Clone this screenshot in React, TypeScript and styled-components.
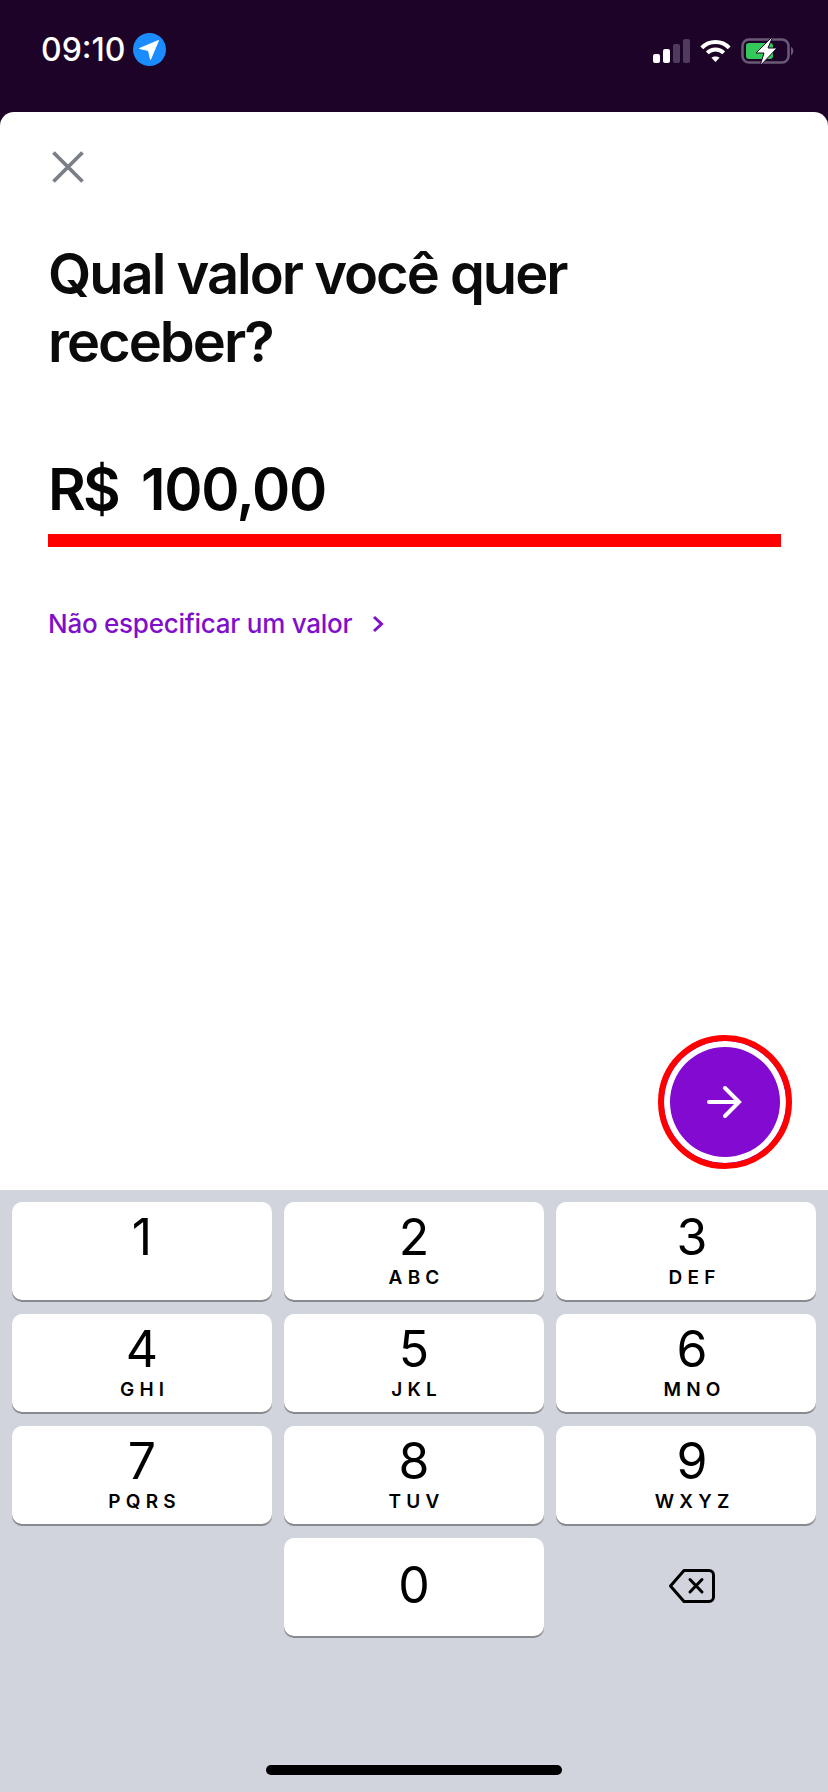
import React from "react";
import styled, { createGlobalStyle } from "styled-components";

const Global = createGlobalStyle`
  html, body { margin: 0; padding: 0; background: #1e0328; }
  * { box-sizing: border-box; }
`;

const Phone = styled.div`
  width: 828px;
  height: 1792px;
  display: flex;
  flex-direction: column;
  overflow: hidden;
  background: #1e0328;
  font-family: Inter, "Liberation Sans", sans-serif;
`;

const StatusBar = styled.div`
  height: 112px;
  flex: none;
  display: flex;
  justify-content: space-between;
  align-items: flex-start;
  padding: 30px 34px 0 41px;
`;

const TimeGroup = styled.div`
  display: flex;
  align-items: center;
  gap: 8px;
  margin-top: 3px;
`;

const Time = styled.span`
  color: #fff;
  font-size: 32px;
  line-height: 33px;
  font-weight: 500;
`;

const StatusIcons = styled.div`
  display: flex;
  align-items: center;
  gap: 10px;
  padding-top: 6px;
`;

const Sheet = styled.main`
  flex: 1;
  background: #fff;
  border-radius: 14px 14px 0 0;
  display: flex;
  flex-direction: column;
  padding: 0 36px 21px 48px;
`;

const CloseButton = styled.button`
  align-self: flex-start;
  border: 0;
  padding: 0;
  background: none;
  width: 40px;
  height: 40px;
  margin: 35px 0 0 0;
  display: flex;
`;

const Title = styled.h1`
  margin: 53px 0 0;
  width: 600px;
  font-size: 56px;
  line-height: 68px;
  font-weight: 570;
  letter-spacing: -2px;
  color: #0b0b0b;
`;

const AmountField = styled.div`
  margin: 75px 11px 0 0;
  height: 96px;
  border-bottom: 13px solid #ff0000;
  display: flex;
  gap: 23px;
  font-size: 58px;
  line-height: 76px;
  font-weight: 570;
  color: #050505;
`;

const Currency = styled.span`
  letter-spacing: -2.8px;
`;

const AmountValue = styled.span`
  letter-spacing: -1.3px;
`;

const LinkRow = styled.a`
  margin-top: 60px;
  display: flex;
  align-items: center;
  gap: 20px;
  color: #7f0fcb;
  font-size: 26px;
  line-height: 34px;
  font-weight: 500;
  letter-spacing: -0.25px;
`;

const Fab = styled.button`
  margin-top: auto;
  align-self: flex-end;
  width: 134px;
  height: 134px;
  border-radius: 50%;
  border: 6px solid #ff0000;
  background: #820ad1;
  box-shadow: inset 0 0 0 6px #fff;
  padding: 0;
  display: flex;
  align-items: center;
  justify-content: center;
`;

const Keyboard = styled.section`
  height: 602px;
  flex: none;
  position: relative;
  background: #d1d4dc;
  padding: 12px 12px 0;
  display: grid;
  grid-template-columns: repeat(3, 260px);
  grid-auto-rows: 98px;
  column-gap: 12px;
  row-gap: 14px;
`;

const Key = styled.div<{ $right?: boolean }>`
  background: #fff;
  border-radius: 10px;
  box-shadow: 0 2px 0 #898a8d;
  display: flex;
  flex-direction: column;
  align-items: center;
  color: #000;
  padding-left: ${(p) => (p.$right ? "12px" : "0")};
`;

const Digit = styled.span<{ $alone?: boolean }>`
  font-size: 50px;
  line-height: 52px;
  font-weight: 400;
  margin-top: ${(p) => (p.$alone ? "21px" : "9px")};
`;

const Letters = styled.span`
  font-size: 19px;
  line-height: 22px;
  font-weight: 600;
  letter-spacing: 5.2px;
  margin: 4px -5.2px 0 0;
`;

const EmptyKey = styled.div``;

const BackspaceKey = styled.div`
  display: flex;
  align-items: center;
  justify-content: center;
  padding: 0 0 2px 11px;
`;

const HomeBar = styled.div`
  position: absolute;
  left: 266px;
  bottom: 17px;
  width: 296px;
  height: 10px;
  border-radius: 5px;
  background: #000;
`;

const keys: [string, string][] = [
  ["1", ""],
  ["2", "ABC"],
  ["3", "DEF"],
  ["4", "GHI"],
  ["5", "JKL"],
  ["6", "MNO"],
  ["7", "PQRS"],
  ["8", "TUV"],
  ["9", "WXYZ"],
];

export default function App() {
  return (
    <Phone>
      <Global />
      <StatusBar>
        <TimeGroup>
          <Time>09:10</Time>
          <svg width="33" height="33" viewBox="0 0 33 33">
            <circle cx="16.5" cy="16.5" r="16.5" fill="#1a8cff" />
            <path d="M6.5 15.5 L25.5 7.5 L17.5 26.5 L15.5 17.5 Z" fill="#fff" stroke="#fff" strokeLinejoin="round" />
          </svg>
        </TimeGroup>
        <StatusIcons>
          <svg width="37" height="24" viewBox="0 0 37 24">
            <rect x="0" y="15" width="7" height="9" rx="2" fill="#fff" />
            <rect x="10" y="10" width="7" height="14" rx="2" fill="#fff" />
            <rect x="20" y="5" width="7" height="19" rx="2" fill="#4f3b5c" />
            <rect x="30" y="0" width="7" height="24" rx="2" fill="#4f3b5c" />
          </svg>
          <svg width="31" height="24" viewBox="0 0 34 26" fill="none" stroke="#fff" strokeWidth="4.4">
            <path d="M2 9.5 C10 1 24 1 32 9.5" />
            <path d="M8 15 C13 10 21 10 26 15" />
            <path d="M17 25 L12.5 20.5 C15 18.5 19 18.5 21.5 20.5 Z" fill="#fff" stroke="none" />
          </svg>
          <svg width="53" height="30" viewBox="0 0 53 30">
            <rect x="1.5" y="3.5" width="46" height="23" rx="6.5" fill="none" stroke="#6b5a76" strokeWidth="2.5" />
            <rect x="5" y="7" width="27" height="16" rx="3" fill="#34c759" />
            <path d="M50 11 C53 12 53 18 50 19 Z" fill="#6b5a76" />
            <path d="M32 0 L15 17 H23 L19 30 L36 12 H27 Z" fill="#fff" stroke="#1e0328" strokeWidth="1" />
          </svg>
        </StatusIcons>
      </StatusBar>
      <Sheet>
        <CloseButton aria-label="Fechar">
          <svg width="40" height="40" viewBox="0 0 40 40" stroke="#7a7f87" strokeWidth="3.8">
            <path d="M5.5 5.5 L34.5 34.5 M34.5 5.5 L5.5 34.5" />
          </svg>
        </CloseButton>
        <Title>Qual valor você quer receber?</Title>
        <AmountField>
          <Currency>R$</Currency>
          <AmountValue>100,00</AmountValue>
        </AmountField>
        <LinkRow>
          Não especificar um valor
          <svg width="12" height="18" viewBox="0 0 12 18" fill="none" stroke="#7f0fcb" strokeWidth="3">
            <path d="M2 2 L9.5 9 L2 16" />
          </svg>
        </LinkRow>
        <Fab aria-label="Continuar">
          <svg width="36" height="34" viewBox="0 0 36 34" fill="none" stroke="#fff" strokeWidth="4" strokeLinecap="round">
            <path d="M2 17 H32 M18 3 L32 17 L18 31" />
          </svg>
        </Fab>
      </Sheet>
      <Keyboard>
        {keys.map(([d, l], i) => (
          <Key key={d} $right={i % 3 === 2}>
            <Digit>{d}</Digit>
            {l && <Letters>{l}</Letters>}
          </Key>
        ))}
        <EmptyKey />
        <Key>
          <Digit $alone>0</Digit>
        </Key>
        <BackspaceKey>
          <svg width="46" height="34" viewBox="0 0 46 34" fill="none" stroke="#000" strokeWidth="3" strokeLinejoin="round" strokeLinecap="round">
            <path d="M15 1.5 H40 A4.5 4.5 0 0 1 44.5 6 V28 A4.5 4.5 0 0 1 40 32.5 H15 L1.5 17 Z" />
            <path d="M21 10.5 L33 23 M33 10.5 L21 23" />
          </svg>
        </BackspaceKey>
        <HomeBar />
      </Keyboard>
    </Phone>
  );
}
